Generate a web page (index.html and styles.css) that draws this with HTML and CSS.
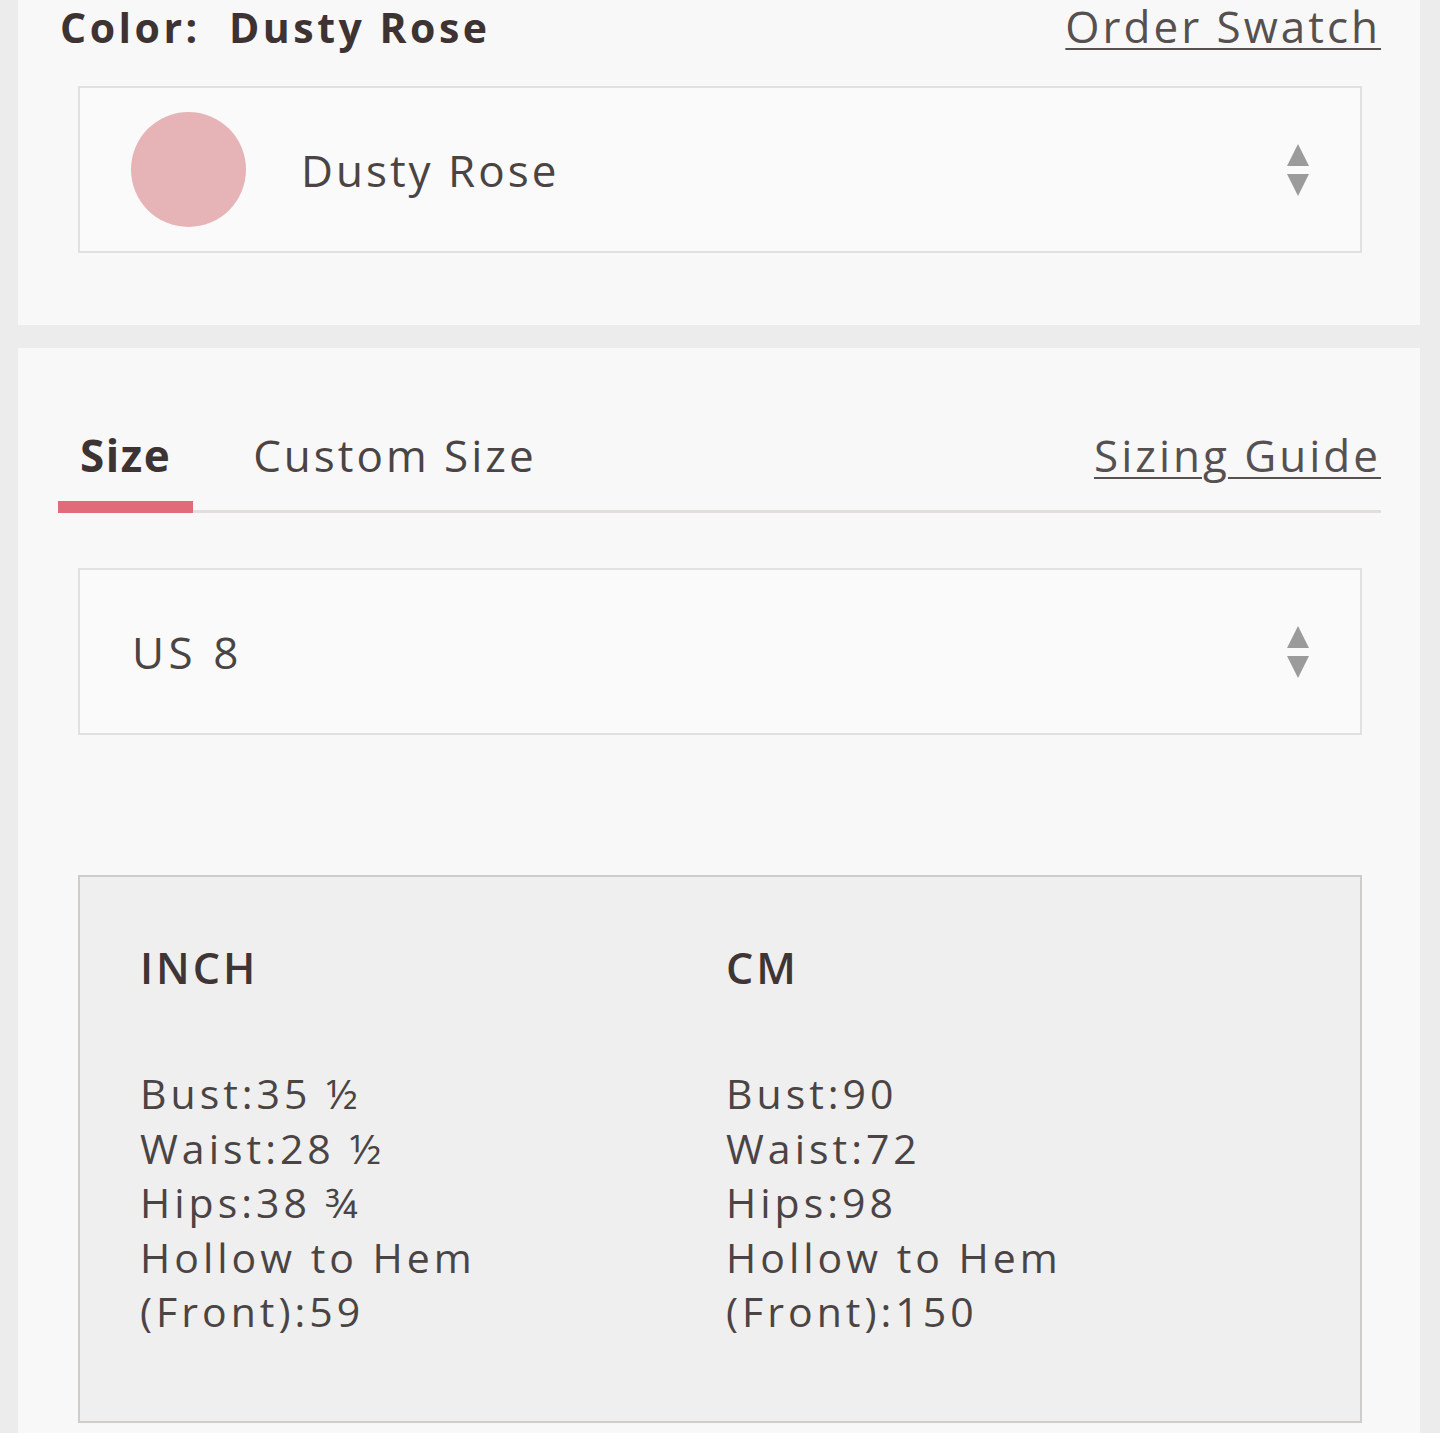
FILE: index.html
```html
<!DOCTYPE html>
<html lang="en">
<head>
<meta charset="utf-8">
<title>Color and Size</title>
<link rel="stylesheet" href="styles.css">
</head>
<body>
<div class="page">
  <section class="card card-color">
    <div class="head">
      <span class="label">Color:&nbsp; Dusty Rose</span>
      <a class="link" href="#">Order Swatch</a>
    </div>
    <div class="select">
      <span class="swatch"></span>
      <span class="sel-text swatch-text">Dusty Rose</span>
      <svg class="arrows" width="22" height="52" viewBox="0 0 22 52"><path d="M11 0 L22 22 L0 22 Z M0 30 L22 30 L11 52 Z" fill="#9b9b9b"/></svg>
    </div>
  </section>
  <section class="card card-size">
    <div class="tabs">
      <span class="tab active">Size</span>
      <span class="tab second">Custom Size</span>
      <a class="link guide" href="#">Sizing Guide</a>
    </div>
    <div class="select size-select">
      <span class="sel-text">US 8</span>
      <svg class="arrows" width="22" height="52" viewBox="0 0 22 52"><path d="M11 0 L22 22 L0 22 Z M0 30 L22 30 L11 52 Z" fill="#9b9b9b"/></svg>
    </div>
    <div class="info">
      <div class="col">
        <div class="col-head">INCH</div>
        <div class="line">Bust:35 ½</div>
        <div class="line">Waist:28 ½</div>
        <div class="line">Hips:38 ¾</div>
        <div class="line">Hollow to Hem</div>
        <div class="line">(Front):59</div>
      </div>
      <div class="col">
        <div class="col-head">CM</div>
        <div class="line">Bust:90</div>
        <div class="line">Waist:72</div>
        <div class="line">Hips:98</div>
        <div class="line">Hollow to Hem</div>
        <div class="line">(Front):150</div>
      </div>
    </div>
  </section>
</div>
</body>
</html>
```
FILE: styles.css
```css
html, body {
  margin: 0;
  padding: 0;
}
body {
  background: #ececec;
  font-family: "Open Sans", Lato, sans-serif;
  color: #474141;
  height: 1433px;
  overflow: hidden;
}
.page {
  padding: 0 20px 0 18px;
  display: flex;
  flex-direction: column;
  gap: 23px;
}
.card {
  background: #f8f8f8;
  padding: 0 39px 0 40px;
}
.card-color {
  height: 325px;
  box-sizing: border-box;
  padding-top: 2px;
}
.head {
  display: flex;
  align-items: baseline;
  justify-content: space-between;
  padding-left: 2px;
  height: 48px;
  line-height: 48px;
}
.label {
  font-weight: 700;
  font-size: 41px;
  color: #3d3333;
  letter-spacing: 3.5px;
}
.link {
  font-size: 44px;
  color: #565050;
  text-decoration: underline;
  text-decoration-thickness: 2px;
  text-underline-offset: 5px;
  letter-spacing: 3px;
}
.select {
  margin: 36px 19px 0 20px;
  height: 167px;
  box-sizing: border-box;
  border: 2px solid #e1e1e1;
  background: #fafafa;
  display: flex;
  align-items: center;
  padding: 0 51px 0 51px;
}
.swatch {
  width: 115px;
  height: 115px;
  border-radius: 50%;
  background: #e6b4b6;
  flex: none;
}
.sel-text {
  font-size: 44px;
  color: #4a4444;
  letter-spacing: 3px;
  flex: 1;
}
.size-select .sel-text {
  letter-spacing: 4.5px;
}
.swatch-text {
  margin-left: 55px;
}
.arrows {
  flex: none;
}
.card-size {
  padding-top: 81px;
  padding-bottom: 40px;
}
.tabs {
  display: flex;
  align-items: flex-end;
  border-bottom: 3px solid #e2dede;
  line-height: 53px;
}
.tab {
  font-size: 44px;
  padding: 0 22px 19px;
  border-bottom: 12px solid transparent;
  margin-bottom: -3px;
  letter-spacing: 3px;
  color: #4a4444;
}
.tab.active {
  font-weight: 700;
  color: #3d3333;
  border-bottom-color: #e06c7b;
  letter-spacing: 1.5px;
}
.tab.second {
  margin-left: 38px;
}
.guide {
  margin-left: auto;
  padding-bottom: 31px;
  margin-bottom: -3px;
}
.size-select {
  margin-top: 55px;
  padding-left: 52px;
}
.info {
  margin: 140px 19px 0 20px;
  height: 548px;
  box-sizing: border-box;
  border: 2px solid #cfcccc;
  background: #efefef;
  padding: 66px 0 0 60px;
  display: grid;
  grid-template-columns: 586px 1fr;
}
.col-head {
  font-weight: 600;
  font-size: 43px;
  line-height: 50px;
  color: #3f3535;
  letter-spacing: 3px;
  margin-bottom: 73px;
}
.line {
  font-size: 41px;
  line-height: 54.5px;
  color: #4a4444;
  letter-spacing: 4px;
}
```
